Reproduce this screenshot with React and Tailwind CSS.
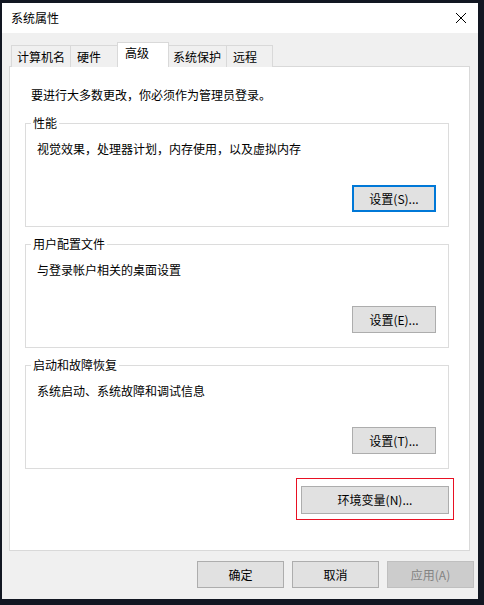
import React from 'react';

const font = { fontFamily: '"Noto Sans CJK SC", "Noto Sans", sans-serif' };

const Btn = ({ label, focused, disabled, className = '' }) => (
    <button
        className={
            'flex items-center justify-center text-[12px] leading-[16px] ' +
            (focused
                ? 'border-2 border-[#0078d7] bg-[#e1e1e1] text-black '
                : disabled
                ? 'border border-[#bfbfbf] bg-[#cccccc] text-[#838383] '
                : 'border border-[#adadad] bg-[#e1e1e1] text-black ') +
            className
        }
    >
        {label}
    </button>
);

const Group = ({ title, desc, button, focused }) => (
    <div className="flex flex-col h-[104px] w-[424px] ml-[15px] border border-[#dcdcdc]">
        <div className="self-start -mt-[9px] ml-[5px] h-[16px] px-[2px] bg-white leading-[16px] text-[12px]">{title}</div>
        <div className="mt-[10px] ml-[11px] leading-[16px] text-[12px]">{desc}</div>
        <Btn label={button} focused={focused} className="mt-auto mb-[14px] mr-[12px] self-end w-[84px] h-[27px]" />
    </div>
);

const tabs = [
    { name: '计算机名', w: 'w-[60px]', pl: 'pl-[5px]' },
    { name: '硬件', w: 'w-[48px]', pl: 'pl-[6px]' },
    { name: '高级', w: 'w-[52px]', pl: 'pl-[7px]', active: true },
    { name: '系统保护', w: 'w-[59px]', pl: 'pl-[4px]' },
    { name: '远程', w: 'w-[47px]', pl: 'pl-[6px]' },
];

export default function App() {
    return (
        <div className="w-[484px] h-[605px] overflow-hidden bg-[#121722] pt-[3px] pl-[2px]" style={font}>
            <div className="w-[476px] h-[596px] bg-[#f0f0f0] flex flex-col text-black">
                {/* title bar */}
                <div className="h-[30px] bg-white flex items-center justify-between pl-[9px] pr-[9px]">
                    <span className="text-[12px] leading-[16px]">系统属性</span>
                    <svg width="12" height="12" viewBox="0 0 12 12" className="mr-[2px]">
                        <path d="M1 1 L11 11 M11 1 L1 11" stroke="#000" strokeWidth="1" />
                    </svg>
                </div>

                {/* tabs */}
                <div className="mt-[9px] ml-[9px] flex items-end h-[25px] relative z-10 -mb-px">
                    {tabs.map((t, i) => (
                        <div
                            key={t.name}
                            className={
                                t.w + ' ' + t.pl + ' ' + (i > 0 ? '-ml-px ' : '') +
                                (t.active
                                    ? 'h-[25px] bg-white border border-b-0 border-[#d9d9d9] pt-[2px] relative z-10'
                                    : 'h-[22px] bg-[#f0f0f0] border border-b-0 border-[#d9d9d9] pt-[3px]')
                            }
                        >
                            <span className="text-[12px] leading-[16px] block">{t.name}</span>
                        </div>
                    ))}
                </div>

                {/* panel */}
                <div className="ml-[7px] w-[461px] h-[485px] bg-white border border-[#d9d9d9] flex flex-col">
                    <div className="pt-[20px] pl-[21px] text-[12px] leading-[16px]">要进行大多数更改，你必须作为管理员登录。</div>
                    <div className="mt-[20px]">
                        <Group title="性能" desc="视觉效果，处理器计划，内存使用，以及虚拟内存" button="设置(S)..." focused />
                    </div>
                    <div className="mt-[17px]">
                        <Group title="用户配置文件" desc="与登录帐户相关的桌面设置" button="设置(E)..." />
                    </div>
                    <div className="mt-[17px]">
                        <Group title="启动和故障恢复" desc="系统启动、系统故障和调试信息" button="设置(T)..." />
                    </div>
                    <div className="mt-[9px] ml-[286px] w-[158px] h-[42px] border border-[#e81123] pt-[7px] pl-[4px]">
                        <Btn label="环境变量(N)..." className="w-[148px] h-[28px]" />
                    </div>
                </div>

                {/* bottom buttons */}
                <div className="mt-[10px] ml-[195px] flex gap-[8px]">
                    <Btn label="确定" className="w-[87px] h-[27px]" />
                    <Btn label="取消" className="w-[87px] h-[27px]" />
                    <Btn label="应用(A)" disabled className="w-[87px] h-[27px]" />
                </div>
            </div>
        </div>
    );
}
